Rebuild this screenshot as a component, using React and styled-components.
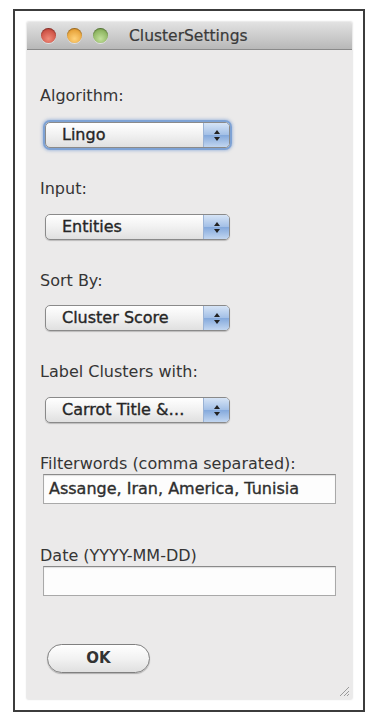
import { createGlobalStyle, styled } from "styled-components";

const GlobalStyle = createGlobalStyle`
  html, body {
    margin: 0;
    padding: 0;
    background: #ffffff;
  }
  body {
    font-family: "DejaVu Sans", "Open Sans", sans-serif;
    color: #333;
  }
`;

const Frame = styled.div`
  box-sizing: border-box;
  margin: 9px 0 0 13px;
  width: 352px;
  height: 703px;
  border: 2px solid #3c3c3c;
  padding: 11px 11px 11px 12px;
  background: #fff;
`;

const Window = styled.div`
  display: flex;
  flex-direction: column;
  height: 100%;
  background: #ebeaea;
  box-shadow: 0 0 2px rgba(0, 0, 0, 0.25);
`;

const TitleBar = styled.div`
  display: flex;
  align-items: center;
  height: 27px;
  padding-left: 14px;
  background: linear-gradient(#e2e2e2, #b8b8b8);
  border-bottom: 1px solid #8a8a8a;
  border-radius: 3px 3px 0 0;
`;

const Light = styled.span`
  width: 15px;
  height: 15px;
  border-radius: 50%;
  margin-right: 11px;
  background: radial-gradient(circle at 50% 72%, ${({ light }) => light} 0%, ${({ dark }) => dark} 80%);
  box-shadow: inset 0 1px 1px rgba(0, 0, 0, 0.35), 0 1px 0 rgba(255, 255, 255, 0.5);
`;

const Title = styled.div`
  margin-left: 10px;
  font-size: 15.5px;
  color: #3a3a3a;
  -webkit-text-stroke: 0.2px #3a3a3a;
`;

const Body = styled.div`
  position: relative;
  flex: 1;
  display: flex;
  flex-direction: column;
  padding: 36px 14px 0 13px;
`;

const Label = styled.div`
  height: 20px;
  line-height: 20px;
  font-size: 16px;
  color: #353535;
  white-space: nowrap;
  margin-top: ${({ top }) => top || 0}px;
`;

const Select = styled.div`
  box-sizing: border-box;
  display: flex;
  width: 185px;
  height: 26px;
  margin: ${({ top }) => top || 15}px 0 0 5px;
  border: 1px solid #8a8a8a;
  border-radius: 5px;
  background: linear-gradient(#ffffff, #f1f1f1 50%, #e0e0e0);
  box-shadow: ${({ focused }) =>
    focused
      ? "0 0 0 2px #7ea2d4, 0 0 3px 3px rgba(110, 150, 210, 0.5)"
      : "0 1px 1px rgba(0, 0, 0, 0.2)"};
  overflow: hidden;
`;

const SelectText = styled.div`
  flex: 1;
  padding-left: 16px;
  line-height: 24px;
  font-size: 16px;
  color: #262626;
  -webkit-text-stroke: 0.35px #262626;
  white-space: nowrap;
`;

const Stepper = styled.div`
  display: flex;
  flex-direction: column;
  align-items: center;
  justify-content: center;
  gap: 3px;
  width: 25px;
  border-left: 1px solid #9ab2d4;
  background: linear-gradient(#d6e4f6, #a2bfe6 50%, #84a9dc 51%, #c2d6f0);
`;

const Arrow = styled.span`
  width: 0;
  height: 0;
  border-left: 3px solid transparent;
  border-right: 3px solid transparent;
  ${({ up }) => (up ? "border-bottom: 4px solid #222;" : "border-top: 4px solid #222;")}
`;

const TextBox = styled.div`
  box-sizing: border-box;
  width: 293px;
  height: 30px;
  margin: 0 0 0 3px;
  padding-left: 5px;
  border: 1px solid #a9a9a9;
  border-top-color: #8a8a8a;
  background: #fdfdfd;
  box-shadow: inset 0 1px 1px rgba(0, 0, 0, 0.12);
  line-height: 28px;
  font-size: 16px;
  color: #2e2e2e;
  -webkit-text-stroke: 0.35px #2e2e2e;
  white-space: nowrap;
`;

const Button = styled.div`
  box-sizing: border-box;
  width: 103px;
  height: 29px;
  margin: 48px 0 0 7px;
  border: 1px solid #808080;
  border-radius: 15px;
  background: linear-gradient(#ffffff, #f2f2f2 50%, #e0e0e0);
  box-shadow: 0 1px 1px rgba(0, 0, 0, 0.25);
  text-align: center;
  line-height: 27px;
  font-size: 15px;
  font-weight: bold;
  color: #333;
`;

const Grip = styled.svg`
  position: absolute;
  right: 2px;
  bottom: 2px;
`;

const PopUp = ({ value, focused, top }) => (
  <Select focused={focused} top={top}>
    <SelectText>{value}</SelectText>
    <Stepper>
      <Arrow up />
      <Arrow />
    </Stepper>
  </Select>
);

export default function App() {
  return (
    <>
      <GlobalStyle />
      <Frame>
        <Window>
          <TitleBar>
            <Light light="#f08a78" dark="#c6453a" />
            <Light light="#ffd27a" dark="#e39a2e" />
            <Light light="#c2e09a" dark="#80aa52" />
            <Title>ClusterSettings</Title>
          </TitleBar>
          <Body>
            <Label>Algorithm:</Label>
            <PopUp value="Lingo" focused top={16} />
            <Label top={31}>Input:</Label>
            <PopUp value="Entities" top={15} />
            <Label top={31}>Sort By:</Label>
            <PopUp value="Cluster Score" top={14} />
            <Label top={31}>Label Clusters with:</Label>
            <PopUp value="Carrot Title &…" top={15} />
            <Label top={31}>Filterwords (comma separated):</Label>
            <TextBox>Assange, Iran, America, Tunisia</TextBox>
            <Label top={42}>Date (YYYY-MM-DD)</Label>
            <TextBox />
            <Button>OK</Button>
            <Grip width="12" height="12" viewBox="0 0 12 12">
              <path d="M11 2 L2 11 M11 6 L6 11 M11 9 L9 11" stroke="#9a9a9a" strokeWidth="1" />
            </Grip>
          </Body>
        </Window>
      </Frame>
    </>
  );
}
